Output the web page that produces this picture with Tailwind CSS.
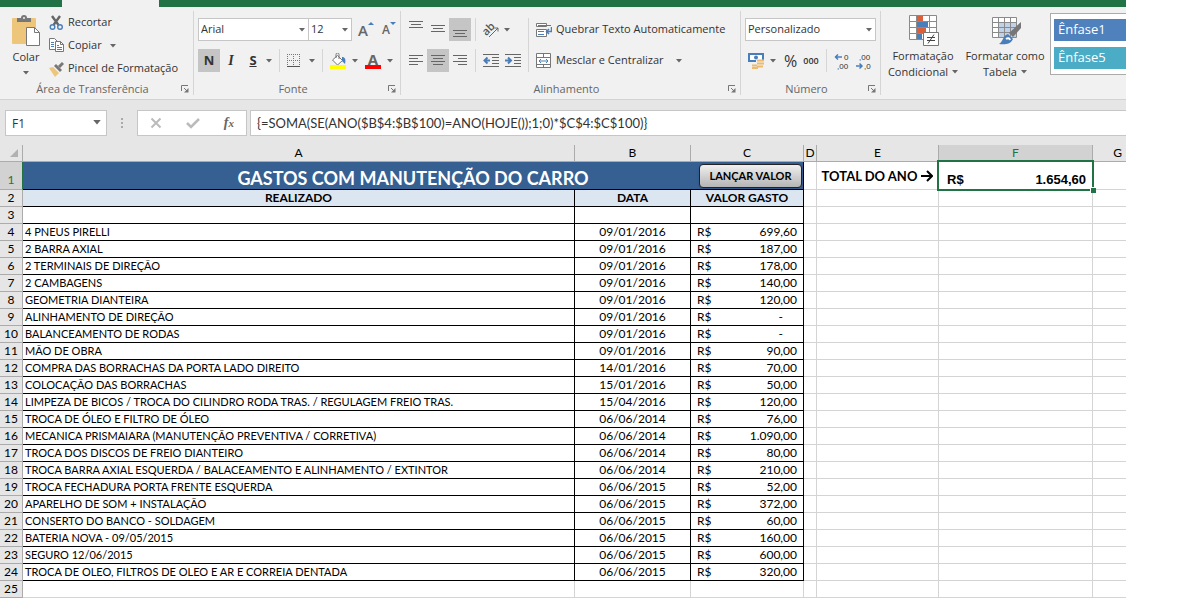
<!DOCTYPE html>
<html lang="pt-BR">
<head>
    <meta charset="UTF-8">
    <meta name="viewport" content="width=device-width, initial-scale=1.0">
    <title>Gastos com Manutenção do Carro</title>
    <script src="https://cdn.jsdelivr.net/npm/@tailwindcss/browser@4"></script>
</head>
<body class="bg-white">
    <!-- Shared icons -->
    <svg class="hidden">
        <symbol id="caret" viewBox="0 0 6 4"><path d="M0 0h6L3 3.5z" fill="#666"/></symbol>
        <symbol id="launcher" viewBox="0 0 8 8"><path d="M.5 6V.5H7" fill="none" stroke="#777"/><path d="M3 3l3 3" stroke="#777"/><path d="M7.500 3v4.500H3z" fill="#777"/></symbol>
    </svg>

    <div class="mr-[62px] overflow-hidden font-['Open_Sans','Noto_Sans',sans-serif] text-[11px] text-[#333]">
        <!-- Tab strip -->
        <div class="flex h-[7px] bg-[#217346]">
            <div class="ml-[62px] w-[97px] bg-[#f1f1f1]"></div>
        </div>

        <!-- Ribbon -->
        <div class="flex h-[93px] border-b border-[#d2d2d2] bg-[#f1f1f1] py-1 whitespace-nowrap">
            <!-- Clipboard -->
            <section class="flex w-[194px] shrink-0 flex-col border-r border-[#d5d5d5]">
                <div class="flex h-[73px] gap-1 pl-2">
                    <button class="flex w-9 flex-col items-center pt-1">
                        <svg class="h-8 w-8 shrink-0" viewBox="0 0 32 32">
                            <rect x="2" y="3" width="24" height="26" rx="1" fill="#edc67c"/>
                            <path d="M7 3h4a3 3 0 0 1 6 0h4v4H7z" fill="#777"/><circle cx="14" cy="3" r="1" fill="#f1f1f1"/>
                            <path d="M16.500 12.500h8l5 5v13h-13z" fill="#fff" stroke="#777"/>
                            <path d="M24.500 12.500v5h5" fill="none" stroke="#777"/>
                        </svg>
                        <span class="leading-5">Colar</span>
                        <svg class="mt-1 h-1 w-1.5 shrink-0"><use href="#caret"/></svg>
                    </button>
                    <div class="flex flex-col">
                        <button class="flex h-[23px] items-center gap-1">
                            <svg class="h-4 w-4" viewBox="0 0 16 16">
                                <path d="M4 1l6.500 9M12 1L5.500 10" stroke="#666" stroke-width="2.400" fill="none"/>
                                <circle cx="4.500" cy="12" r="2.300" fill="none" stroke="#4a7ebb" stroke-width="1.400"/>
                                <circle cx="12" cy="12" r="2.300" fill="none" stroke="#4a7ebb" stroke-width="1.400"/>
                            </svg>
                            Recortar
                        </button>
                        <button class="flex h-[23px] items-center gap-1">
                            <svg class="h-4 w-4" viewBox="0 0 16 16">
                                <path d="M1.500 .5h5l3 3v8h-8z" fill="#fff" stroke="#777"/>
                                <path d="M3 4.500h3M3 6.500h3M3 8.500h3" stroke="#4a7ebb"/>
                                <path d="M7.500 3.500h5l3 3v7h-8z" fill="#fff" stroke="#777"/>
                                <path d="M12.500 3.500v3h3" fill="none" stroke="#777"/>
                                <path d="M9 7.500h2M9 9.500h5M9 11.500h5" stroke="#4a7ebb"/>
                            </svg>
                            Copiar
                            <svg class="ml-1 h-1 w-1.5"><use href="#caret"/></svg>
                        </button>
                        <button class="flex h-[23px] items-center gap-1">
                            <svg class="h-4 w-4" viewBox="0 0 16 16">
                                <path d="M1 7l4-1 6 6-4 4z" fill="#edc67c"/>
                                <path d="M6 5l2-2 6 6-2 2z" fill="#777"/>
                                <path d="M11 6l4-4" stroke="#777" stroke-width="3"/>
                            </svg>
                            Pincel de Formatação
                        </button>
                    </div>
                </div>
                <div class="flex h-3 items-center px-1">
                    <span class="flex-1 text-center text-[11px] leading-3 text-[#666]">Área de Transferência</span>
                    <button aria-label="Área de Transferência"><svg class="h-2 w-2"><use href="#launcher"/></svg></button>
                </div>
            </section>

            <!-- Font -->
            <section class="flex w-[207px] shrink-0 flex-col border-r border-[#d5d5d5]">
                <div class="flex h-[73px] flex-col gap-2 pt-[7px] pl-1">
                    <div class="flex h-[23px] items-center">
                        <div class="relative">
                            <select aria-label="Fonte" class="h-[23px] w-[111px] appearance-none border border-[#c6c6c6] bg-white px-0.5"><option>Arial</option></select>
                            <svg class="pointer-events-none absolute top-2.5 right-1 h-1 w-1.5"><use href="#caret"/></svg>
                        </div>
                        <div class="relative">
                            <select aria-label="Tamanho da fonte" class="h-[23px] w-[43px] appearance-none border border-l-0 border-[#c6c6c6] bg-white px-0.5"><option>12</option></select>
                            <svg class="pointer-events-none absolute top-2.5 right-1 h-1 w-1.5"><use href="#caret"/></svg>
                        </div>
                        <button class="ml-1.5 flex h-4 items-end text-[15px] leading-4 font-semibold text-[#666]">A<svg class="h-4 w-1.5" viewBox="0 0 6 16"><path d="M0 3h6L3 0z" fill="#4a7ebb"/></svg></button>
                        <button class="ml-2 flex h-4 items-end text-xs leading-4 font-semibold text-[#666]">A<svg class="h-4 w-1.5" viewBox="0 0 6 16"><path d="M0 0h6L3 3z" fill="#4a7ebb"/></svg></button>
                    </div>
                    <div class="flex h-[23px] items-center">
                        <button class="h-[23px] w-[22px] bg-[#c5c5c5] text-[13px] font-bold">N</button>
                        <button class="w-[22px] font-['Liberation_Serif',serif] text-sm font-bold italic">I</button>
                        <button class="w-[22px] text-[13px] font-bold underline">S</button>
                        <svg class="ml-0.5 h-1 w-1.5"><use href="#caret"/></svg>
                        <div class="mx-[7px] h-[23px] w-px bg-[#d5d5d5]"></div>
                        <button aria-label="Bordas"><svg class="h-3.5 w-3.5" viewBox="0 0 14 14"><path d="M0 .5h14M0 6.500h14M.5 0v13M6.500 0v13M12.500 0v13" stroke="#777" stroke-dasharray="1 1"/><path d="M0 12.500h13" stroke="#555"/></svg></button>
                        <svg class="ml-2 h-1 w-1.5"><use href="#caret"/></svg>
                        <div class="mx-[7px] h-[23px] w-px bg-[#d5d5d5]"></div>
                        <button aria-label="Cor de Preenchimento"><svg class="h-4 w-4" viewBox="0 0 16 16">
                            <path d="M2.500 7l5-4.500 5 5-5 4.500z" fill="#fff" stroke="#777"/><path d="M6 5V1.500a1.500 1.500 0 0 1 3 0V6" fill="none" stroke="#777"/>
                            <path d="M12 4c3 0 4 2 3 7l-3-3z" fill="#4a7ebb"/><path d="M0 12h16v4H0z" fill="#ff0"/>
                        </svg></button>
                        <svg class="ml-1.5 h-1 w-1.5"><use href="#caret"/></svg>
                        <button aria-label="Cor da Fonte" class="ml-[7px] h-4 w-4 border-b-4 border-[#f00] text-[15px] leading-3 font-bold text-[#666]">A</button>
                        <svg class="ml-1.5 h-1 w-1.5"><use href="#caret"/></svg>
                    </div>
                </div>
                <div class="flex h-3 items-center px-1">
                    <span class="flex-1 text-center text-[11px] leading-3 text-[#666]">Fonte</span>
                    <button aria-label="Fonte"><svg class="h-2 w-2"><use href="#launcher"/></svg></button>
                </div>
            </section>

            <!-- Alignment -->
            <section class="flex w-[340px] shrink-0 flex-col border-r border-[#d5d5d5]">
                <div class="flex h-[73px] pt-[7px] pl-1">
                    <div class="flex flex-col gap-2">
                        <div class="flex h-[23px] items-center">
                            <button aria-label="Alinhar em Cima" class="h-[23px] w-[22px]"><svg class="h-[23px] w-[22px]" viewBox="0 0 22 23"><path d="M4 3.500h14M6 6.500h10M4 9.500h14" stroke="#666"/></svg></button>
                            <button aria-label="Alinhar no Meio" class="h-[23px] w-[22px]"><svg class="h-[23px] w-[22px]" viewBox="0 0 22 23"><path d="M4 7.500h14M6 10.500h10M4 13.500h14" stroke="#666"/></svg></button>
                            <button aria-label="Alinhar Embaixo" class="h-[23px] w-[22px] bg-[#c5c5c5]"><svg class="h-[23px] w-[22px]" viewBox="0 0 22 23"><path d="M4 12.500h14M6 15.500h10M4 18.500h14" stroke="#666"/></svg></button>
                            <div class="mx-1 h-[23px] w-px bg-[#d5d5d5]"></div>
                            <button aria-label="Orientação" class="ml-0.5 flex items-center gap-1"><svg class="h-4 w-[18px] overflow-visible" viewBox="0 0 18 16">
                                <text x="0" y="12" transform="rotate(-45 5 8)" font-size="11" font-weight="600" fill="#555">ab</text>
                                <path d="M7 15l9-9M16 9.500V6h-3.500" fill="none" stroke="#666"/>
                            </svg><svg class="h-1 w-1.5"><use href="#caret"/></svg></button>
                        </div>
                        <div class="flex h-[23px] items-center">
                            <button aria-label="Alinhar à Esquerda" class="h-[23px] w-[22px]"><svg class="h-[23px] w-[22px]" viewBox="0 0 22 23"><path d="M4 6.500h14M4 9.500h9M4 12.500h14M4 15.500h9" stroke="#666"/></svg></button>
                            <button aria-label="Centralizar" class="h-[23px] w-[22px] bg-[#c5c5c5]"><svg class="h-[23px] w-[22px]" viewBox="0 0 22 23"><path d="M4 6.500h14M6 9.500h10M4 12.500h14M6 15.500h10" stroke="#666"/></svg></button>
                            <button aria-label="Alinhar à Direita" class="h-[23px] w-[22px]"><svg class="h-[23px] w-[22px]" viewBox="0 0 22 23"><path d="M4 6.500h14M9 9.500h9M4 12.500h14M9 15.500h9" stroke="#666"/></svg></button>
                            <div class="mx-1 h-[23px] w-px bg-[#d5d5d5]"></div>
                            <button aria-label="Diminuir Recuo" class="ml-[3px]"><svg class="h-4 w-4" viewBox="0 0 16 16"><path d="M0 1.500h16M9 4.500h7M9 7.500h7M9 10.500h7M0 13.500h16" stroke="#666"/><path d="M7 7.500H2M4.500 4.500l-3 3 3 3" fill="none" stroke="#4a7ebb" stroke-width="2"/></svg></button>
                            <button aria-label="Aumentar Recuo" class="ml-1.5"><svg class="h-4 w-4" viewBox="0 0 16 16"><path d="M0 1.500h16M9 4.500h7M9 7.500h7M9 10.500h7M0 13.500h16" stroke="#666"/><path d="M0 7.500h5M3 4.500l3 3-3 3" fill="none" stroke="#4a7ebb" stroke-width="2"/></svg></button>
                        </div>
                    </div>
                    <div class="mx-[7px] h-[54px] w-px bg-[#d5d5d5]"></div>
                    <div class="flex flex-col gap-2">
                        <button class="flex h-[23px] items-center gap-1"><svg class="h-4 w-4" viewBox="0 0 16 16">
                            <path d="M.5 1.500h10v3H.5zM.5 7.500h10v7H.5z" fill="#fff" stroke="#777"/>
                            <path d="M2 3.500h13M2 9.500h6M2 12.500h6" stroke="#4a7ebb"/><path d="M15.500 5v4.500H11M13 7l-2.500 2.500L13 12" fill="none" stroke="#4a7ebb" stroke-width="1.500"/>
                        </svg>Quebrar Texto Automaticamente</button>
                        <button class="flex h-[23px] items-center gap-1"><svg class="h-4 w-4" viewBox="0 0 16 16">
                            <path d="M.5 .5h14v14H.5zM.5 4.500h14M.5 11.500h14M7.500 .5v4M7.500 11.500v3" fill="#fff" stroke="#777"/>
                            <path d="M3 8h9M5 6L3 8l2 2M10 6l2 2-2 2" fill="none" stroke="#4a7ebb"/>
                        </svg>Mesclar e Centralizar<svg class="ml-2 h-1 w-1.5"><use href="#caret"/></svg></button>
                    </div>
                </div>
                <div class="flex h-3 items-center px-1">
                    <span class="flex-1 text-center text-[11px] leading-3 text-[#666]">Alinhamento</span>
                    <button aria-label="Alinhamento"><svg class="h-2 w-2"><use href="#launcher"/></svg></button>
                </div>
            </section>

            <!-- Number -->
            <section class="flex w-[140px] shrink-0 flex-col border-r border-[#d5d5d5]">
                <div class="flex h-[73px] flex-col gap-2 pt-[7px] pl-1">
                    <div class="relative mr-1">
                        <select aria-label="Formato de Número" class="block h-[23px] w-full appearance-none border border-[#c6c6c6] bg-white px-0.5"><option>Personalizado</option></select>
                        <svg class="pointer-events-none absolute top-2.5 right-1 h-1 w-1.5"><use href="#caret"/></svg>
                    </div>
                    <div class="flex h-[23px] items-center pl-[3px]">
                        <button aria-label="Formato de Contabilização" class="flex items-center gap-1.5"><svg class="h-4 w-4" viewBox="0 0 16 16">
                            <path d="M1 1h14v7H1z" fill="#fff" stroke="#4a7ebb" stroke-width="2"/><circle cx="8" cy="4.500" r="2" fill="#4a7ebb"/>
                            <path d="M8 7h8v8H8z" fill="#f1f1f1"/>
                            <path d="M9 7.500h7M9 10.500h7M9 13.500h6M4 12.500h5M4 15h6" stroke="#edb96a" stroke-width="2"/>
                        </svg><svg class="h-1 w-1.5"><use href="#caret"/></svg></button>
                        <button class="ml-2 text-base">%</button>
                        <button class="ml-1.5 text-[9px] font-semibold">000</button>
                        <div class="mx-[7px] h-[23px] w-px bg-[#d5d5d5]"></div>
                        <button aria-label="Aumentar Casas Decimais"><svg class="h-[18px] w-4 font-['Liberation_Sans',sans-serif]" viewBox="0 0 16 18"><path d="M8 5H1M4 2.500L1.500 5 4 7.500" fill="none" stroke="#4a7ebb" stroke-width="1.500"/><text x="10" y="8" font-size="8" fill="#333">0</text><text x="3" y="17" font-size="8" fill="#333">,00</text></svg></button>
                        <button aria-label="Diminuir Casas Decimais" class="ml-1.5"><svg class="h-[18px] w-4 font-['Liberation_Sans',sans-serif]" viewBox="0 0 16 18"><path d="M0 14h6M3.500 11.500L6 14l-2.500 2.500" fill="none" stroke="#4a7ebb" stroke-width="1.500"/><text x="3" y="8" font-size="8" fill="#333">,00</text><text x="8" y="17" font-size="8" fill="#333">,0</text></svg></button>
                    </div>
                </div>
                <div class="flex h-3 items-center px-1">
                    <span class="flex-1 text-center text-[11px] leading-3 text-[#666]">Número</span>
                    <button aria-label="Número"><svg class="h-2 w-2"><use href="#launcher"/></svg></button>
                </div>
            </section>

            <!-- Styles -->
            <section class="flex min-w-0 flex-1 pl-1.5">
                <button class="flex w-[72px] shrink-0 flex-col items-center pt-1 leading-4">
                    <svg class="mb-px h-8 w-8 shrink-0" viewBox="0 0 32 32">
                        <path d="M2 .5h27v24H2z" fill="#fff"/>
                        <path d="M10 1h6v6h-6zM10 13h9v6h-9z" fill="#d9603b"/><path d="M10 7h11v6H10zM10 19h5v6h-5z" fill="#4a7ebb"/>
                        <path d="M2.500 .5h27v24h-27zM2.500 6.500h27M2.500 12.500h27M2.500 18.500h27M9.500 .5v24M22.500 .5v24" fill="none" stroke="#8a8a8a"/>
                        <path d="M16.500 17.500h15v13h-15z" fill="#fff" stroke="#777"/><path d="M20 22.500h8M20 25.500h8M27 19.500l-6 9" stroke="#444"/>
                    </svg>
                    <span>Formatação</span>
                    <span class="flex items-center gap-1">Condicional <svg class="h-1 w-1.5"><use href="#caret"/></svg></span>
                </button>
                <button class="ml-1 flex w-[84px] shrink-0 flex-col items-center pt-1 leading-4">
                    <svg class="mb-px h-8 w-8 shrink-0" viewBox="0 0 32 32">
                        <path d="M3 2h24v20H3z" fill="#fff"/><path d="M9 7h18v15H9z" fill="#bed3ea"/>
                        <path d="M3.500 2.500h24v20h-24zM3.500 7.500h24M3.500 12.500h24M3.500 17.500h24M9.500 2.500v20M15.500 2.500v20M21.500 2.500v20" fill="none" stroke="#8a8a8a"/>
                        <path d="M32 7v6l-8 9-4-4z" fill="#777"/><path d="M19 19l5 5c-2 5-8 6-14 5 4-2 4-9 9-10z" fill="#4a7ebb"/><path d="M17 24q3-2 4 1" fill="none" stroke="#fff" stroke-width="2"/>
                    </svg>
                    <span>Formatar como</span>
                    <span class="flex items-center gap-1">Tabela <svg class="h-1 w-1.5"><use href="#caret"/></svg></span>
                </button>
                <div class="mt-0.5 ml-[3px] flex h-[62px] min-w-0 flex-1 flex-col gap-1.5 border border-r-0 border-[#ababab] bg-white pt-[5px] pl-[3px] text-[13px] text-white">
                    <button class="h-[22px] bg-[#4f81bd] pl-1 text-left">Ênfase1</button>
                    <button class="h-[22px] bg-[#4bacc6] pl-1 text-left">Ênfase5</button>
                </div>
            </section>
        </div>

        <!-- Formula bar -->
        <div class="flex h-[45px] bg-[#e6e6e6] pt-2.5 pl-[5px]">
            <div class="relative">
                <input aria-label="Caixa de Nome" value="F1" class="h-[26px] w-[102px] border border-[#c6c6c6] bg-white px-1.5 text-xs">
                <svg class="pointer-events-none absolute top-2.5 right-1.5 h-[5px] w-2"><use href="#caret"/></svg>
            </div>
            <div class="flex h-[26px] w-[30px] flex-col items-center justify-center gap-0.5">
                <div class="h-0.5 w-0.5 bg-[#aaa]"></div><div class="h-0.5 w-0.5 bg-[#aaa]"></div><div class="h-0.5 w-0.5 bg-[#aaa]"></div>
            </div>
            <div class="flex h-[26px] w-[110px] items-center justify-around border border-[#c6c6c6] bg-white">
                <button aria-label="Cancelar"><svg class="h-3 w-3" viewBox="0 0 12 12"><path d="M1.500 1.500l9 9M10.500 1.500l-9 9" stroke="#bbb" stroke-width="2"/></svg></button>
                <button aria-label="Inserir"><svg class="h-3 w-3.5" viewBox="0 0 14 12"><path d="M1 6l4 4 8-8" fill="none" stroke="#bbb" stroke-width="2.500"/></svg></button>
                <button class="font-['Liberation_Serif',serif] text-sm leading-4 font-bold text-[#666] italic">f<span class="text-[11px]">x</span></button>
            </div>
            <input aria-label="Barra de Fórmulas" value="{=SOMA(SE(ANO($B$4:$B$100)=ANO(HOJE());1;0)*$C$4:$C$100)}" class="ml-[3px] h-[26px] min-w-0 flex-1 border border-r-0 border-[#c6c6c6] bg-white px-1.5 font-[Lato,sans-serif] text-[13px]">
        </div>

        <!-- Sheet -->
        <table class="w-full table-fixed border-separate border-spacing-0 font-[Lato,sans-serif] text-xs leading-4 text-black">
            <colgroup>
                <col class="w-[23px]"><col class="w-[552px]"><col class="w-[116px]"><col class="w-[113px]"><col class="w-[13px]"><col class="w-[122px]"><col class="w-[154px]"><col>
            </colgroup>
            <thead class="bg-[#e6e6e6]">
                <tr class="[&>th]:h-[17px] [&>th]:border-r [&>th]:border-b [&>th]:border-[#ababab] [&>th]:font-normal [&>th:last-child]:border-r-0">
                    <th><svg class="mr-1 ml-auto h-2 w-2" viewBox="0 0 8 8"><path d="M8 0v8H0z" fill="#b1b1b1"/></svg></th>
                    <th>A</th><th>B</th><th>C</th><th>D</th><th>E</th>
                    <th class="bg-[#d2d2d2] text-[#217346]">F</th>
                    <th class="pr-1 text-right">G</th>
                </tr>
            </thead>
            <tbody id="sheet" class="[&_td]:border-r [&_td]:border-b [&_th]:border-r [&_th]:border-b [&_tr>:last-child]:border-r-0">
                <tr>
                    <th class="h-7 border-r-[#217346] border-b-[#ababab] bg-[#d2d2d2] pt-2 font-normal text-[#217346]">1</th>
                    <td colspan="3" class="relative border-black bg-[#366092] pt-1 text-center text-lg leading-5 font-bold text-white">
                        GASTOS COM MANUTENÇÃO DO CARRO
                        <button class="absolute top-0.5 right-px h-6 w-[103px] rounded border border-[#222] bg-linear-to-b from-[#f0f0f0] to-[#b5b5b5] text-[11px] font-bold text-black shadow">LANÇAR VALOR</button>
                    </td>
                    <td class="border-[#d4d4d4]"></td>
                    <td class="border-[#d4d4d4]">
                        <div class="flex items-center justify-center gap-1 text-[13px] font-bold whitespace-nowrap">TOTAL DO ANO <svg class="h-3 w-3" viewBox="0 0 12 12"><path d="M0 6h11M6 1l5 5-5 5" fill="none" stroke="#000" stroke-width="2"/></svg></div>
                    </td>
                    <td class="relative border-[#d4d4d4] pt-2 pr-1.5 pl-2 font-['Liberation_Sans',sans-serif] text-[13px] font-bold">
                        <div class="flex justify-between"><span>R$</span><span>1.654,60</span></div>
                        <div class="pointer-events-none absolute -inset-x-0.5 -inset-y-0.5 border-2 border-[#217346]"></div>
                        <div class="absolute -right-1 -bottom-1 h-1.5 w-1.5 border-t border-l border-white bg-[#217346]"></div>
                    </td>
                    <td class="border-[#d4d4d4]"></td>
                </tr>
                <tr class="font-bold">
                    <th class="border-[#ababab] bg-[#e6e6e6] font-normal">2</th>
                    <td class="border-black bg-[#dce6f1] text-center">REALIZADO</td>
                    <td class="border-black bg-[#dce6f1] text-center">DATA</td>
                    <td class="border-black bg-[#dce6f1] text-center">VALOR GASTO</td>
                    <td class="border-[#d4d4d4]"></td><td class="border-[#d4d4d4]"></td><td class="border-[#d4d4d4]"></td><td class="border-[#d4d4d4]"></td>
                </tr>
            </tbody>
        </table>
    </div>

    <script>
        // Rows 3 to 25: description, date, value
        const rows = [
            ['', '', ''],
            ['4 PNEUS PIRELLI', '09/01/2016', '699,60'],
            ['2 BARRA AXIAL', '09/01/2016', '187,00'],
            ['2 TERMINAIS DE DIREÇÃO', '09/01/2016', '178,00'],
            ['2 CAMBAGENS', '09/01/2016', '140,00'],
            ['GEOMETRIA DIANTEIRA', '09/01/2016', '120,00'],
            ['ALINHAMENTO DE DIREÇÃO', '09/01/2016', '-'],
            ['BALANCEAMENTO DE RODAS', '09/01/2016', '-'],
            ['MÃO DE OBRA', '09/01/2016', '90,00'],
            ['COMPRA DAS BORRACHAS DA PORTA LADO DIREITO', '14/01/2016', '70,00'],
            ['COLOCAÇÃO DAS BORRACHAS', '15/01/2016', '50,00'],
            ['LIMPEZA DE BICOS / TROCA DO CILINDRO RODA TRAS. / REGULAGEM FREIO TRAS.', '15/04/2016', '120,00'],
            ['TROCA DE ÓLEO E FILTRO DE ÓLEO', '06/06/2014', '76,00'],
            ['MECANICA PRISMAIARA (MANUTENÇÃO PREVENTIVA / CORRETIVA)', '06/06/2014', '1.090,00'],
            ['TROCA DOS DISCOS DE FREIO DIANTEIRO', '06/06/2014', '80,00'],
            ['TROCA BARRA AXIAL ESQUERDA / BALACEAMENTO E ALINHAMENTO / EXTINTOR', '06/06/2014', '210,00'],
            ['TROCA FECHADURA PORTA FRENTE ESQUERDA', '06/06/2015', '52,00'],
            ['APARELHO DE SOM + INSTALAÇÃO', '06/06/2015', '372,00'],
            ['CONSERTO DO BANCO - SOLDAGEM', '06/06/2015', '60,00'],
            ['BATERIA NOVA - 09/05/2015', '06/06/2015', '160,00'],
            ['SEGURO 12/06/2015', '06/06/2015', '600,00'],
            ['TROCA DE OLEO, FILTROS DE OLEO E AR E CORREIA DENTADA', '06/06/2015', '320,00'],
            ['', '', ''],
        ];
        const sheet = document.getElementById('sheet');
        rows.forEach(([name, date, value], i) => {
            const line = i === rows.length - 1 ? 'border-[#d4d4d4]' : 'border-black';
            const money = value ? `<div class="flex justify-between"><span>R$</span><span class="${value === '-' ? 'pr-3.5' : ''}">${value}</span></div>` : '';
            sheet.insertAdjacentHTML('beforeend', `
                <tr>
                    <th class="h-[17px] border-[#ababab] bg-[#e6e6e6] font-normal">${i + 3}</th>
                    <td class="${line} pl-0.5 text-[11px] leading-4 whitespace-nowrap">${name}</td>
                    <td class="${line} text-center">${date}</td>
                    <td class="${line} px-1.5">${money}</td>
                    <td class="border-[#d4d4d4]"></td><td class="border-[#d4d4d4]"></td><td class="border-[#d4d4d4]"></td><td class="border-[#d4d4d4]"></td>
                </tr>`);
        });
    </script>
</body>
</html>
